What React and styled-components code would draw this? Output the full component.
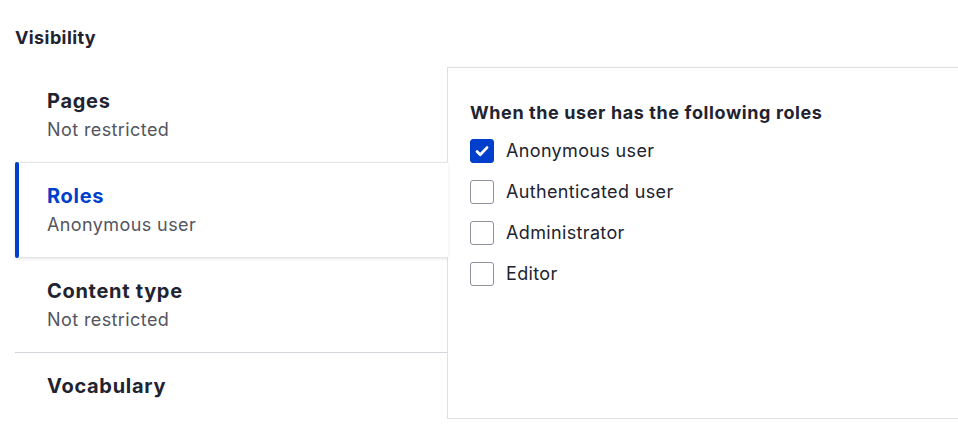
import React, { useState } from 'react';
import styled, { createGlobalStyle } from 'styled-components';

const GlobalStyle = createGlobalStyle`
  html, body {
    margin: 0;
    padding: 0;
    background: #fff;
    overflow: hidden;
  }
  body {
    font-family: Inter, "Noto Sans", sans-serif;
    color: #222330;
    -webkit-font-smoothing: antialiased;
  }
`;

const Page = styled.div`
  padding: 27px 0 0 15px;
`;

const Heading = styled.h3`
  margin: 0 0 18px;
  font-size: 18px;
  line-height: 22px;
  font-weight: 700;
  letter-spacing: 0.4px;
  color: #222330;
`;

const Tabs = styled.div`
  display: flex;
  width: 1000px;
`;

const Menu = styled.ul`
  list-style: none;
  margin: 0;
  padding: 0;
  width: 432px;
  flex: none;
  position: relative;
  z-index: 1;
`;

const Item = styled.li`
  padding: 20px 32px 20px;
  background: #fff;
  border-top: 1px solid ${(p) => (p.$line ? '#d3d4d9' : 'transparent')};
  cursor: pointer;

  ${(p) =>
    p.$selected &&
    `
    position: relative;
    margin-right: -1px;
    border-top-color: #e4e5ea;
    border-bottom: 1px solid #e4e5ea;
    margin-bottom: -1px;
    box-shadow: 0 1px 3px rgba(0, 0, 0, 0.1);
    &::before {
      content: '';
      position: absolute;
      left: 0;
      top: -1px;
      bottom: -1px;
      width: 4px;
      border-radius: 4px;
      background: #003ecc;
    }
  `}
`;

const TabTitle = styled.div`
  font-size: 20px;
  line-height: 26px;
  font-weight: 700;
  letter-spacing: 0.7px;
  color: ${(p) => (p.$selected ? '#003ecc' : '#222330')};
`;

const TabSummary = styled.div`
  margin-top: 4px;
  font-size: 18px;
  line-height: 24px;
  letter-spacing: 0.4px;
  color: #545560;
`;

const Pane = styled.div`
  flex: 1;
  border: 1px solid #dedfe4;
  box-shadow: 0 2px 5px rgba(0, 0, 0, 0.1);
  padding: 33px 22px;
  background: #fff;
`;

const Legend = styled.div`
  font-size: 18px;
  line-height: 24px;
  font-weight: 700;
  letter-spacing: 0.6px;
  margin-bottom: 14px;
`;

const Options = styled.div`
  display: flex;
  flex-direction: column;
  gap: 17px;
`;

const Option = styled.label`
  display: flex;
  align-items: center;
  gap: 12px;
  height: 24px;
  font-size: 18px;
  line-height: 24px;
  letter-spacing: 0.35px;
  color: #222330;
  cursor: pointer;
`;

const Box = styled.span`
  width: 24px;
  height: 24px;
  flex: none;
  box-sizing: border-box;
  border-radius: 3px;
  border: 1px solid ${(p) => (p.$checked ? '#003ecc' : '#8e929c')};
  background: ${(p) => (p.$checked ? '#003ecc' : '#fff')};
  display: flex;
  align-items: center;
  justify-content: center;
`;

const Check = () => (
  <svg width="16" height="16" viewBox="0 0 16 16" fill="none">
    <path d="M3 8.6l3.2 3.1L13 4.6" stroke="#fff" strokeWidth="2.8" strokeLinecap="round" strokeLinejoin="round" />
  </svg>
);

const tabs = [
  { title: 'Pages', summary: 'Not restricted' },
  { title: 'Roles', summary: 'Anonymous user' },
  { title: 'Content type', summary: 'Not restricted' },
  { title: 'Vocabulary' },
];

const roles = ['Anonymous user', 'Authenticated user', 'Administrator', 'Editor'];

const App = () => {
  const [active, setActive] = useState(1);
  const [checked, setChecked] = useState({ 'Anonymous user': true });

  return (
    <Page>
      <GlobalStyle />
      <Heading>Visibility</Heading>
      <Tabs>
        <Menu>
          {tabs.map((t, i) => (
            <Item
              key={t.title}
              $selected={i === active}
              $line={i > 0 && i !== active && i - 1 !== active}
              onClick={() => setActive(i)}
            >
              <TabTitle $selected={i === active}>{t.title}</TabTitle>
              {t.summary && <TabSummary>{t.summary}</TabSummary>}
            </Item>
          ))}
        </Menu>
        <Pane>
          <Legend>When the user has the following roles</Legend>
          <Options>
            {roles.map((r) => (
              <Option key={r} onClick={() => setChecked({ ...checked, [r]: !checked[r] })}>
                <Box $checked={checked[r]}>{checked[r] && <Check />}</Box>
                {r}
              </Option>
            ))}
          </Options>
        </Pane>
      </Tabs>
    </Page>
  );
};

export default App;
